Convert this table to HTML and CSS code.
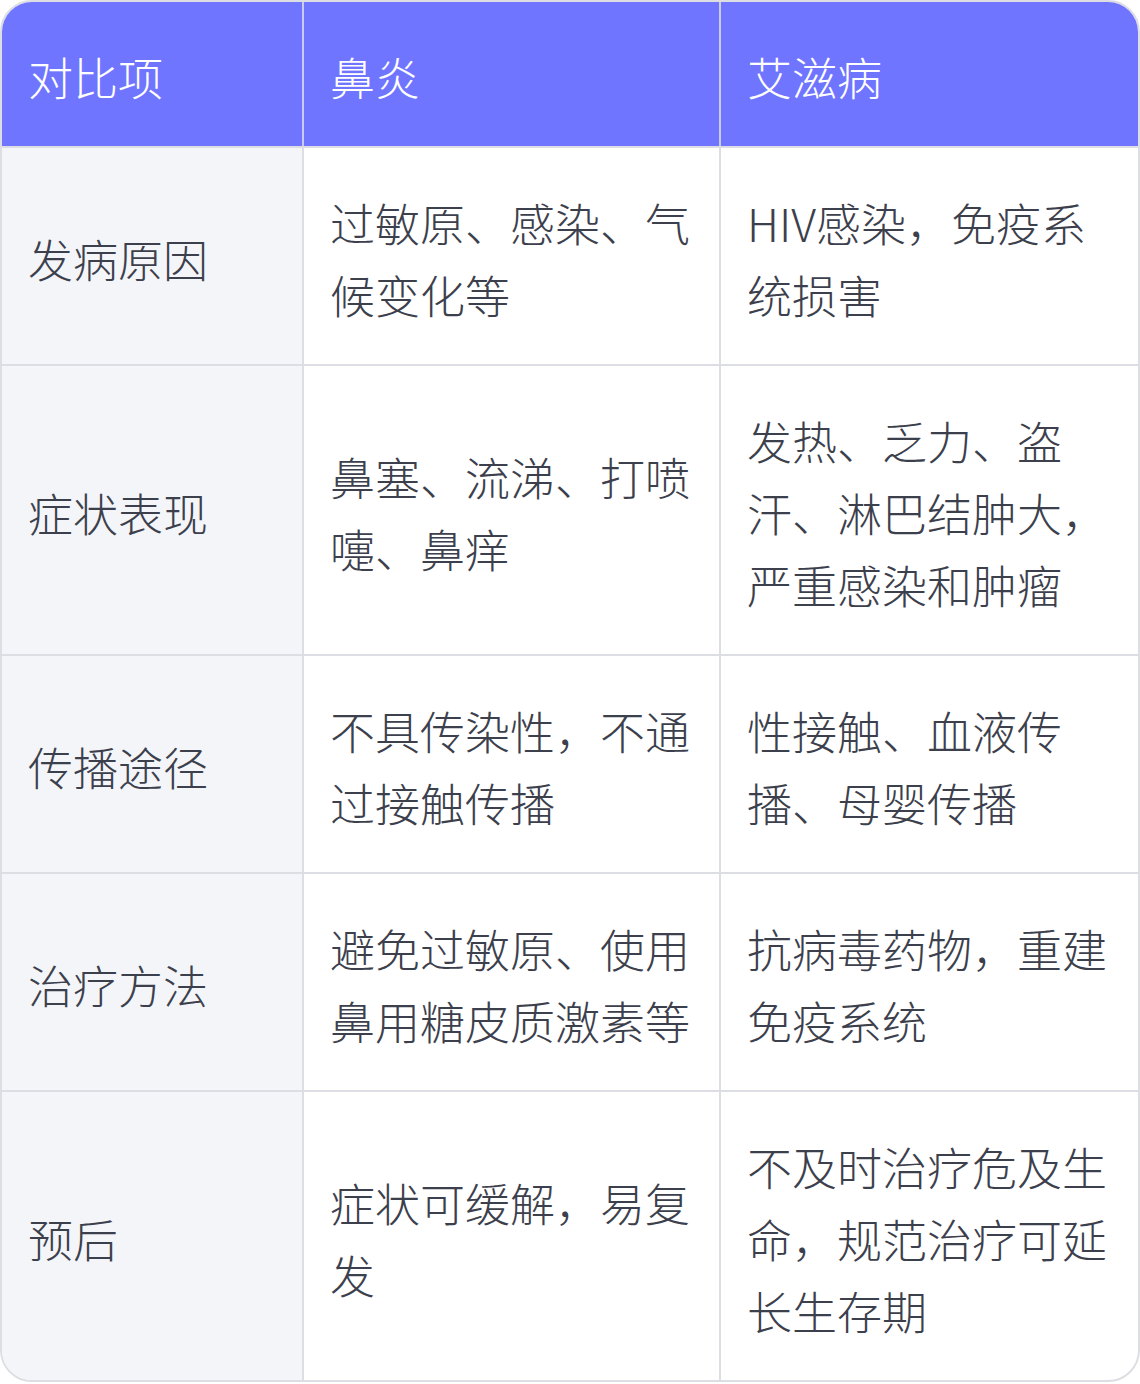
FILE: index.html
```html
<!DOCTYPE html>
<html lang="zh-CN">
<head>
<meta charset="utf-8">
<link rel="stylesheet" href="styles.css">
</head>
<body>
<div class="wrap">
<table class="cmp">
<colgroup><col class="c1"><col class="c2"><col class="c3"></colgroup>
<thead>
<tr><th>对比项</th><th>鼻炎</th><th>艾滋病</th></tr>
</thead>
<tbody>
<tr><td>发病原因</td><td>过敏原、感染、气候变化等</td><td>HIV感染，免疫系统损害</td></tr>
<tr><td>症状表现</td><td>鼻塞、流涕、打喷嚏、鼻痒</td><td>发热、乏力、盗汗、淋巴结肿大，严重感染和肿瘤</td></tr>
<tr><td>传播途径</td><td>不具传染性，不通过接触传播</td><td>性接触、血液传播、母婴传播</td></tr>
<tr><td>治疗方法</td><td>避免过敏原、使用鼻用糖皮质激素等</td><td>抗病毒药物，重建免疫系统</td></tr>
<tr><td>预后</td><td>症状可缓解，易复发</td><td>不及时治疗危及生命，规范治疗可延长生存期</td></tr>
</tbody>
</table>
</div>
</body>
</html>
```
FILE: styles.css
```css
html, body { margin: 0; padding: 0; background: #ffffff; }
.wrap {
  width: 1140px;
  box-sizing: border-box;
  border: 2px solid #dddee3;
  border-radius: 32px;
  overflow: hidden;
}
.cmp {
  width: 100%;
  border-collapse: collapse;
  table-layout: fixed;
  font-family: "Noto Sans CJK SC", "Noto Sans", sans-serif;
  font-weight: 300;
  font-size: 45px;
  line-height: 72px;
  color: #3c404c;
}
.c1 { width: 301px; }
.c2 { width: 417px; }
.c3 { width: 418px; }
.cmp th, .cmp td {
  padding: 39px 26px 33px;
  text-align: left;
  vertical-align: middle;
  border: 2px solid #dddee3;
}
.cmp tr > :first-child { border-left: none; }
.cmp tr > :last-child { border-right: none; }
.cmp thead tr > * { border-top: none; }
.cmp tbody tr:last-child > * { border-bottom: none; }
.cmp th {
  background: #6f75ff;
  color: #ffffff;
  font-weight: 300;
  border-color: #c9cbe8;
  border-bottom-color: #dddee3;
}
.cmp td:first-child { background: #f4f5f9; }
```
